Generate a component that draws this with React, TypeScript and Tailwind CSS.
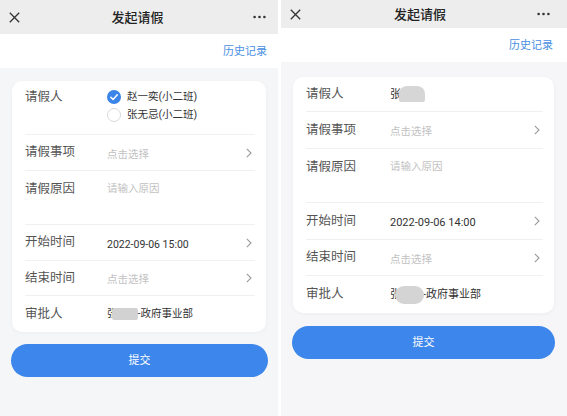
import React from "react";

const FONT = "font-['Roboto','Noto_Sans_CJK_SC',sans-serif]";

function XIcon() {
  return (
    <svg width="11" height="11" viewBox="0 0 11 11" className="block">
      <path d="M0.8 0.8 L10.2 10.2 M10.2 0.8 L0.8 10.2" stroke="#333" strokeWidth="1.3" fill="none" />
    </svg>
  );
}

function Dots() {
  return (
    <svg width="13" height="4" viewBox="0 0 13 4" className="block">
      <circle cx="1.6" cy="2" r="1.3" fill="#333" />
      <circle cx="6.5" cy="2" r="1.3" fill="#333" />
      <circle cx="11.4" cy="2" r="1.3" fill="#333" />
    </svg>
  );
}

function Chevron() {
  return (
    <svg width="6" height="10" viewBox="0 0 6 10" className="block shrink-0 mr-[3px]">
      <polyline points="0.8,0.8 5,5 0.8,9.2" stroke="#9a9a9a" strokeWidth="1.1" fill="none" />
    </svg>
  );
}

function Checked() {
  return (
    <svg width="14" height="14" viewBox="0 0 14 14" className="block shrink-0">
      <circle cx="7" cy="7" r="7" fill="#3b84e8" />
      <polyline points="3.8,7.2 6.1,9.4 10.3,4.8" stroke="#fff" strokeWidth="1.5" fill="none" strokeLinecap="round" strokeLinejoin="round" />
    </svg>
  );
}

function Unchecked() {
  return <span className="block w-[14px] h-[14px] rounded-full border border-[#d9d9d9] shrink-0" />;
}

type RowProps = {
  cls: string;
  label: string;
  labelW: string;
  children?: React.ReactNode;
  chevron?: boolean;
  top?: boolean;
  last?: boolean;
};

function Row({ cls, label, labelW, children, chevron, top, last }: RowProps) {
  return (
    <div
      className={`flex ${top ? "items-start" : "items-center"} ${cls} ${last ? "" : "border-b border-[#f0f0f0]"}`}
    >
      <div className={`${labelW} shrink-0 text-[12.5px] leading-none text-[#555]`}>{label}</div>
      <div className="flex-1 min-w-0">{children}</div>
      {chevron && <Chevron />}
    </div>
  );
}

function Header({ h, px }: { h: string; px: string }) {
  return (
    <div className={`${h} ${px} bg-[#ededed] grid grid-cols-[1fr_auto_1fr] items-center`}>
      <div className="justify-self-start">
        <XIcon />
      </div>
      <div className="text-[13px] font-medium text-[#222] leading-none">发起请假</div>
      <div className="justify-self-end">
        <Dots />
      </div>
    </div>
  );
}

const PH = "text-[10.5px] leading-none text-[#c2c2c2]";

function LeftPanel() {
  const lw = "w-[82px]";
  const val = "text-[10.5px] leading-none text-[#333]";
  return (
    <div className="w-[278px] h-[416px] bg-[#f5f6f8] flex flex-col shrink-0">
      <Header h="h-[34px]" px="pl-[9px] pr-[12px]" />
      <div className="h-[34px] bg-white flex items-center justify-end pr-[11px]">
        <span className="text-[11px] text-[#4a8fe2] leading-none">历史记录</span>
      </div>
      <div className="mt-[13px] ml-[12px] mr-[12px] bg-white rounded-[10px] pl-[13px] pr-[11px] shadow-[0_1px_4px_rgba(0,0,0,0.04)]">
        <Row cls="h-[54px] pt-[10px]" label="请假人" labelW={lw} top>
          <div className="flex flex-col gap-[4px] -mt-[1px]">
            <div className="flex items-center gap-[6px] h-[14px]">
              <Checked />
              <span className={val}>赵一奕(小二班)</span>
            </div>
            <div className="flex items-center gap-[6px] h-[14px]">
              <Unchecked />
              <span className={val}>张无忌(小二班)</span>
            </div>
          </div>
        </Row>
        <Row cls="h-[36px]" label="请假事项" labelW={lw} chevron>
          <span className={PH}>点击选择</span>
        </Row>
        <Row cls="h-[54px] pt-[12px]" label="请假原因" labelW={lw} top>
          <span className={`${PH} block mt-[1px]`}>请输入原因</span>
        </Row>
        <Row cls="h-[36px]" label="开始时间" labelW={lw} chevron>
          <span className={val}>2022-09-06 15:00</span>
        </Row>
        <Row cls="h-[35px]" label="结束时间" labelW={lw} chevron>
          <span className={PH}>点击选择</span>
        </Row>
        <Row cls="h-[36px]" label="审批人" labelW={lw} last>
          <span className={`${val} flex items-center`}>
            <span>张</span>
            <span className="inline-block w-[26px] h-[12px] -ml-[6px] bg-[#d2d2d2] rounded-[2px] blur-[0.5px]" />
            <span>-政府事业部</span>
          </span>
        </Row>
      </div>
      <div className="mt-[12px] ml-[11px] mr-[10px] h-[33px] rounded-full bg-[#3d86eb] flex items-center justify-center">
        <span className="text-[11px] text-white leading-none">提交</span>
      </div>
    </div>
  );
}

function RightPanel() {
  const lw = "w-[84px]";
  const val = "text-[11px] leading-none text-[#333]";
  return (
    <div className="w-[286px] h-[416px] bg-[#f6f6f8] flex flex-col shrink-0">
      <Header h="h-[28px]" px="pl-[9px] pr-[17px]" />
      <div className="h-[34px] bg-white flex items-center justify-end pr-[14px]">
        <span className="text-[11px] text-[#4a8fe2] leading-none">历史记录</span>
      </div>
      <div className="mt-[15px] ml-[12px] mr-[13px] bg-white rounded-[10px] pl-[13px] pr-[11px] shadow-[0_1px_4px_rgba(0,0,0,0.04)]">
        <Row cls="h-[35px]" label="请假人" labelW={lw}>
          <span className={`${val} flex items-center`}>
            <span>张</span>
            <span className="inline-block w-[26px] h-[16px] -ml-[2px] bg-[#d6d6d6] rounded-t-[8px] rounded-b-[2px] blur-[0.5px]" />
          </span>
        </Row>
        <Row cls="h-[37px]" label="请假事项" labelW={lw} chevron>
          <span className={PH}>点击选择</span>
        </Row>
        <Row cls="h-[54px] pt-[12px]" label="请假原因" labelW={lw} top>
          <span className={`${PH} block mt-[1px]`}>请输入原因</span>
        </Row>
        <Row cls="h-[37px]" label="开始时间" labelW={lw} chevron>
          <span className={val}>2022-09-06 14:00</span>
        </Row>
        <Row cls="h-[36px]" label="结束时间" labelW={lw} chevron>
          <span className={PH}>点击选择</span>
        </Row>
        <Row cls="h-[37px]" label="审批人" labelW={lw} last>
          <span className={`${val} flex items-center`}>
            <span>张</span>
            <span className="inline-block w-[29px] h-[18px] -ml-[6px] bg-[#d4d4d4] rounded-[9px] blur-[0.5px]" />
            <span className="-ml-[1px]">-政府事业部</span>
          </span>
        </Row>
      </div>
      <div className="mt-[13px] ml-[11px] mr-[12px] h-[33px] rounded-full bg-[#3d86eb] flex items-center justify-center">
        <span className="text-[11px] text-white leading-none">提交</span>
      </div>
    </div>
  );
}

export default function App() {
  return (
    <div className={`w-[567px] h-[416px] bg-white flex gap-[3px] overflow-hidden ${FONT}`}>
      <LeftPanel />
      <RightPanel />
    </div>
  );
}
